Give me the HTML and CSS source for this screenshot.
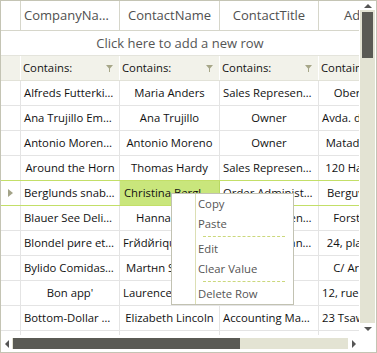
FILE: index.html
```html
<!DOCTYPE html>
<html>
<head>
<meta charset="utf-8">
<link rel="stylesheet" href="styles.css">
</head>
<body>
<div class="grid">
  <div class="viewport">
    <div class="rows">
      <div class="row header">
        <div class="cell ind"></div>
        <div class="cell">CompanyName</div>
        <div class="cell">ContactName</div>
        <div class="cell">ContactTitle</div>
        <div class="cell">Address</div>
      </div>
      <div class="newrow">Click here to add a new row</div>
      <div class="row filter">
        <div class="cell ind"></div>
        <div class="cell"><span class="fl">Contains:</span><svg class="funnel" width="7" height="7" viewBox="0 0 7 7"><polygon points="0,0 7,0 4,3.5 4,7 3,7 3,3.5"/></svg></div>
        <div class="cell"><span class="fl">Contains:</span><svg class="funnel" width="7" height="7" viewBox="0 0 7 7"><polygon points="0,0 7,0 4,3.5 4,7 3,7 3,3.5"/></svg></div>
        <div class="cell"><span class="fl">Contains:</span><svg class="funnel" width="7" height="7" viewBox="0 0 7 7"><polygon points="0,0 7,0 4,3.5 4,7 3,7 3,3.5"/></svg></div>
        <div class="cell"><span class="fl">Contains:</span><svg class="funnel" width="7" height="7" viewBox="0 0 7 7"><polygon points="0,0 7,0 4,3.5 4,7 3,7 3,3.5"/></svg></div>
      </div>
      <div class="row data"><div class="cell ind"></div><div class="cell">Alfreds Futterkiste</div><div class="cell">Maria Anders</div><div class="cell">Sales Representative</div><div class="cell">Obere Str. 57</div></div>
      <div class="row data"><div class="cell ind"></div><div class="cell">Ana Trujillo Emparedados y helados</div><div class="cell">Ana Trujillo</div><div class="cell">Owner</div><div class="cell">Avda. de la Constitución 2222</div></div>
      <div class="row data"><div class="cell ind"></div><div class="cell">Antonio Moreno Taquería</div><div class="cell">Antonio Moreno</div><div class="cell">Owner</div><div class="cell">Mataderos 2312</div></div>
      <div class="row data"><div class="cell ind"></div><div class="cell">Around the Horn</div><div class="cell">Thomas Hardy</div><div class="cell">Sales Representative</div><div class="cell">120 Hanover Sq.</div></div>
      <div class="row data sel"><div class="cell ind"><span class="arrow"></span></div><div class="cell">Berglunds snabbköp</div><div class="cell current">Christina Berglund</div><div class="cell">Order Administrator</div><div class="cell">Berguvsvägen 8</div></div>
      <div class="row data"><div class="cell ind"></div><div class="cell">Blauer See Delikatessen</div><div class="cell">Hanna Moos</div><div class="cell">Sales Representative</div><div class="cell">Forsterstr. 57</div></div>
      <div class="row data"><div class="cell ind"></div><div class="cell">Blondel pиre et fils</div><div class="cell">Frйdйrique Citeaux</div><div class="cell">Marketing Manager</div><div class="cell">24, place Kléber</div></div>
      <div class="row data"><div class="cell ind"></div><div class="cell">Bylido Comidas preparadas</div><div class="cell">Martнn Sommer</div><div class="cell">Owner</div><div class="cell">C/ Araquil, 67</div></div>
      <div class="row data"><div class="cell ind"></div><div class="cell">Bon app'</div><div class="cell">Laurence Lebihan</div><div class="cell">Owner</div><div class="cell">12, rue des Bouchers</div></div>
      <div class="row data"><div class="cell ind"></div><div class="cell">Bottom-Dollar Markets</div><div class="cell">Elizabeth Lincoln</div><div class="cell">Accounting Manager</div><div class="cell">23 Tsawassen Blvd.</div></div>
      <div class="row data"><div class="cell ind"></div><div class="cell">B's Beverages</div><div class="cell">Victoria Ashworth</div><div class="cell">Sales Representative</div><div class="cell">Fauntleroy Circus</div></div>
    </div>
    <div class="menu">
      <div class="item">Copy</div>
      <div class="item">Paste</div>
      <div class="sep"></div>
      <div class="item">Edit</div>
      <div class="item">Clear Value</div>
      <div class="sep"></div>
      <div class="item">Delete Row</div>
    </div>
  </div>
  <div class="vscroll">
    <div class="btn"><span class="tri up"></span></div>
    <div class="vtrack"><div class="vthumb"></div></div>
    <div class="btn bottom"><span class="tri down"></span></div>
  </div>
  <div class="hscroll">
    <div class="hbtn"><span class="tri left"></span></div>
    <div class="htrack"><div class="hthumb"></div></div>
    <div class="hbtn"><span class="tri right"></span></div>
  </div>
  <div class="corner"></div>
</div>
</body>
</html>
```
FILE: styles.css
```css
* { box-sizing: border-box; }
html, body { margin: 0; padding: 0; background: #fff; }
body { font-family: "Open Sans", "Noto Sans", sans-serif; }

.grid {
  width: 377px;
  height: 353px;
  border: 1px solid #c4c4b4;
  display: grid;
  grid-template-columns: 358px 17px;
  grid-template-rows: 334px 17px;
  background: #fff;
}

.viewport {
  position: relative;
  overflow: hidden;
}

.rows { width: 430px; }

.row {
  display: grid;
  grid-template-columns: 20px 99px 100px 99px 100px;
  height: 25px;
  border-bottom: 1px solid #e4e4e4;
}

.cell {
  border-right: 1px solid #e4e4e4;
  padding: 0 3px;
  white-space: nowrap;
  overflow: hidden;
  text-overflow: ellipsis;
  text-align: center;
  line-height: 24px;
  font-size: 11.3px;
  color: #111;
}

.header { height: 30px; border-bottom-color: #d6d6ca; }
.header .cell {
  border-right-color: #d6d6ca;
  font-size: 13px;
  line-height: 29px;
  color: #505050;
}

.newrow {
  width: 358px;
  height: 25px;
  border-bottom: 1px solid #e4e4dc;
  text-align: center;
  font-size: 13px;
  line-height: 24px;
  color: #555;
}

.filter { background: #f2f2ea; border-bottom-color: #e2e2d8; }
.filter .cell {
  border-right-color: #fff;
  display: flex;
  align-items: center;
  justify-content: space-between;
  text-align: left;
  padding: 0 6px 0 2px;
}
.fl { font-size: 11.3px; color: #111; }
.funnel { fill: #a6a688; flex: none; margin-top: 1px; }

.sel { border-bottom-color: #c3df68; box-shadow: 0 -1px 0 #c3df68; }
.current {
  background: #c9e67c;
  text-align: left;
  padding-left: 4px;
  border-right-color: #b9d962;
}

.ind { display: flex; align-items: center; padding: 0 0 0 7px; }
.arrow {
  width: 0;
  height: 0;
  border-left: 5px solid #a3a388;
  border-top: 4px solid transparent;
  border-bottom: 4px solid transparent;
}

.menu {
  position: absolute;
  left: 170px;
  top: 192px;
  width: 123px;
  border: 1px solid #c2c2b2;
  background: linear-gradient(to right, #fff 23px, #dcdfb4 23px, #dcdfb4 24px, #fff 24px);
}
.item {
  height: 20px;
  line-height: 20px;
  padding-left: 26px;
  font-size: 11.3px;
  color: #555;
}
.sep {
  height: 5px;
  margin-left: 31px;
  width: 82px;
  padding-top: 2px;
}
.sep::before {
  content: "";
  display: block;
  border-top: 1px dashed #cbd87c;
}

.vscroll {
  display: flex;
  flex-direction: column;
  align-items: center;
}
.btn { height: 9px; display: flex; align-items: center; justify-content: center; width: 100%; padding-top: 1px; }
.btn.bottom { height: 12px; padding-top: 0; }
.vtrack {
  flex: 1;
  width: 15px;
  background: #e3e3d3;
  padding: 2px 2px 0 2px;
}
.vthumb { height: 46px; background: #5a5a54; }

.hscroll {
  display: flex;
  align-items: center;
}
.hbtn { width: 11px; height: 100%; display: flex; align-items: center; justify-content: center; }
.htrack {
  flex: 1;
  height: 11px;
  background: #e3e3d3;
  padding-left: 1px;
}
.hthumb { width: 227px; height: 100%; background: #5a5a54; }

.tri { width: 0; height: 0; }
.tri.up { border-bottom: 4px solid #555; border-left: 4px solid transparent; border-right: 4px solid transparent; }
.tri.down { border-top: 4px solid #555; border-left: 4px solid transparent; border-right: 4px solid transparent; }
.tri.left { border-right: 4px solid #555; border-top: 4px solid transparent; border-bottom: 4px solid transparent; }
.tri.right { border-left: 4px solid #555; border-top: 4px solid transparent; border-bottom: 4px solid transparent; }

.corner { background: #fff; }
```
